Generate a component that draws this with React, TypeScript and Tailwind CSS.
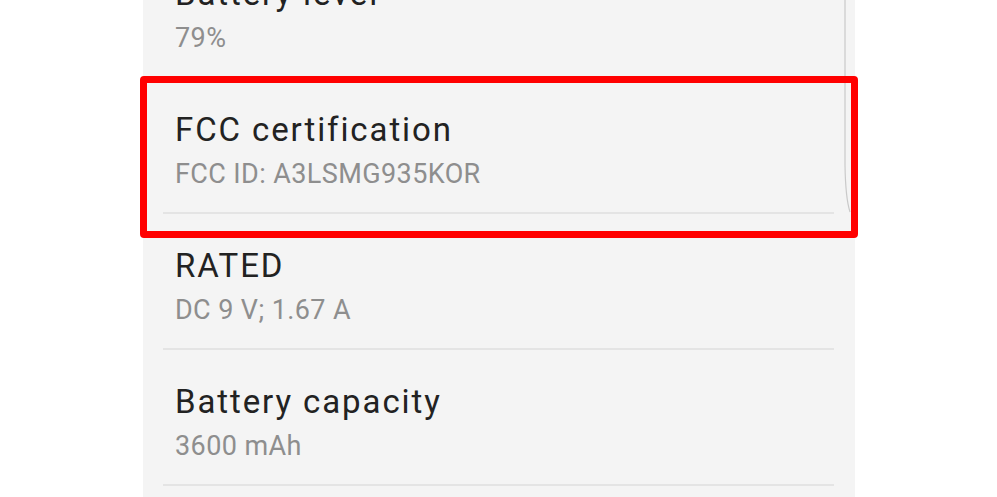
const rows = [
  { title: "Battery level", value: "79%" },
  { title: "FCC certification", value: "FCC ID: A3LSMG935KOR" },
  { title: "RATED", value: "DC 9 V; 1.67 A" },
  { title: "Battery capacity", value: "3600 mAh" },
]

function Row({ title, value }: { title: string; value: string }) {
  return (
    <div className="h-[136px] shrink-0 flex flex-col">
      <div className="flex-1 pl-[32px] pt-[32px]">
        <div className="text-[33px] leading-[40px] tracking-[1.9px] text-[#222222]">{title}</div>
        <div className="mt-[8px] text-[27px] leading-[32px] tracking-[0.4px] text-[#8e8e8e]">{value}</div>
      </div>
      <div className="ml-[20px] mr-[21px] h-[2px] bg-[#e4e4e4]" />
    </div>
  )
}

export default function App() {
  return (
    <div className="relative h-[497px] w-full overflow-hidden bg-white font-['Roboto',sans-serif]">
      <div className="relative ml-[143px] h-full w-[712px] overflow-hidden bg-[#f4f4f4]">
        <div className="-mt-[58px] flex flex-col">
          {rows.map((row) => (
            <Row key={row.title} {...row} />
          ))}
        </div>
        {/* curved phone edge */}
        <svg className="absolute left-[697px] top-0" width="15" height="215" viewBox="0 0 15 215">
          <path d="M5 0 L5 165 Q5.5 198 10 212" fill="none" stroke="#c9c9c9" strokeWidth="1.2" />
        </svg>
      </div>
      {/* highlight box */}
      <div className="absolute left-[140px] top-[76px] h-[162px] w-[718px] rounded-[4px] border-[7px] border-[#ff0000]" />
    </div>
  )
}
